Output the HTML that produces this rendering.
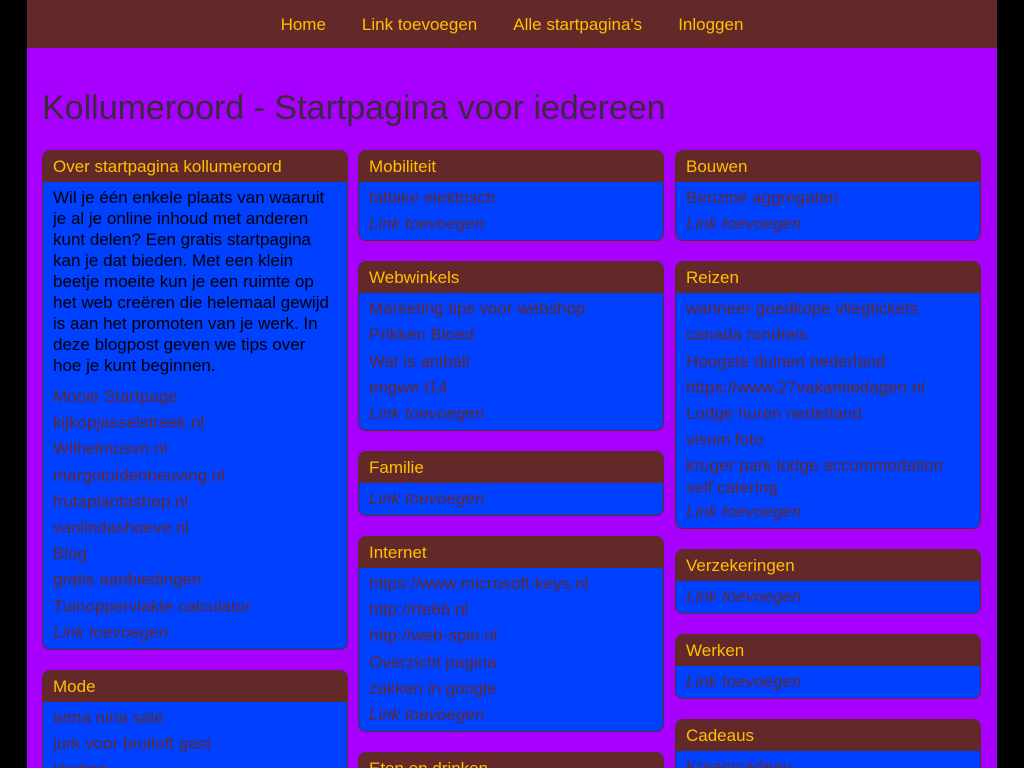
<!DOCTYPE html>
<html><head><meta charset="utf-8"><style>
html,body{margin:0;padding:0;background:#000;height:768px;overflow:hidden;}
body{font-family:"Liberation Sans",Arial,sans-serif;font-size:17px;position:relative;}
.wrap{position:absolute;left:27px;width:970px;top:0;height:768px;background:#a800ff;overflow:hidden;}
.nav{height:48px;background:#632828;text-align:center;}
.nav a{display:inline-block;color:#ffc000;text-decoration:none;line-height:50px;margin:0 18px;font-size:17px;}
h1{position:absolute;left:15px;top:89px;margin:0;font-weight:normal;font-size:34px;color:#3a2a3a;line-height:38px;white-space:nowrap;}
.col{position:absolute;top:150px;width:306px;}
.box{border:1px solid #632828;border-radius:8px;background:#0040ff;overflow:hidden;margin-bottom:20px;}
.hd{background:#632828;color:#ffc000;height:31px;line-height:31px;padding:0 10px;white-space:nowrap;}
.bd{padding:3px 10px 3px;}
.bd a{display:block;color:#632828;line-height:26.2px;text-decoration:none;white-space:nowrap;}
.bd a.add{font-style:italic;line-height:26px;}
.bd p{margin:2px 0 8px;color:#000;line-height:21px;}
</style></head><body><div class="wrap">
<div class="nav"><a>Home</a><a>Link toevoegen</a><a>Alle startpagina's</a><a>Inloggen</a></div>
<h1>Kollumeroord - Startpagina voor iedereen</h1>
<div class="col" style="left:15px">
<div class="box"><div class="hd">Over startpagina kollumeroord</div><div class="bd"><p>Wil je één enkele plaats van waaruit je al je online inhoud met anderen kunt delen? Een gratis startpagina kan je dat bieden. Met een klein beetje moeite kun je een ruimte op het web creëren die helemaal gewijd is aan het promoten van je werk. In deze blogpost geven we tips over hoe je kunt beginnen.</p>
<a>Mooie Startpage</a><a>kijkopjasselstreek.nl</a><a>Wilhelmusvn.nl</a><a>margotoldenbeuving.nl</a><a>frutaplantashop.nl</a><a>vanlindashoeve.nl</a><a>Blog</a><a>gratis aanbiedingen</a><a>Tuinoppervlakte calculator</a><a class="add">Link toevoegen</a></div></div>
<div class="box"><div class="hd">Mode</div><div class="bd"><a>anna nina sale</a><a>jurk voor bruiloft gast</a><a>kleding</a></div></div>
</div>
<div class="col" style="left:331px">
<div class="box"><div class="hd">Mobiliteit</div><div class="bd"><a>fatbike elektrisch</a><a class="add">Link toevoegen</a></div></div>
<div class="box"><div class="hd">Webwinkels</div><div class="bd"><a>Marketing tips voor webshop</a><a>Prikken Bloed</a><a>Wat is aniball</a><a>engwe t14</a><a class="add">Link toevoegen</a></div></div>
<div class="box"><div class="hd">Familie</div><div class="bd"><a class="add">Link toevoegen</a></div></div>
<div class="box"><div class="hd">Internet</div><div class="bd"><a>https://www.microsoft-keys.nl</a><a>http://rte66.nl</a><a>http://web-spin.nl</a><a>Overzicht pagina</a><a>zakken in google</a><a class="add">Link toevoegen</a></div></div>
<div class="box"><div class="hd">Eten en drinken</div><div class="bd"><a>recepten</a></div></div>
</div>
<div class="col" style="left:648px">
<div class="box"><div class="hd">Bouwen</div><div class="bd"><a>Benzine aggregaten</a><a class="add">Link toevoegen</a></div></div>
<div class="box"><div class="hd">Reizen</div><div class="bd"><a>wanneer goedkope vliegtickets</a><a>canada rondreis</a><a>Hoogste duinen nederland</a><a>https://www.27vakantiedagen.nl</a><a>Lodge huren nederland</a><a>visum foto</a><a style="line-height:22px;padding-top:2px;white-space:normal">kruger park lodge accommodation self catering</a><a class="add">Link toevoegen</a></div></div>
<div class="box"><div class="hd">Verzekeringen</div><div class="bd"><a class="add">Link toevoegen</a></div></div>
<div class="box"><div class="hd">Werken</div><div class="bd"><a class="add">Link toevoegen</a></div></div>
<div class="box"><div class="hd">Cadeaus</div><div class="bd"><a>Kraamcadeau</a></div></div>
</div>
</div></body></html>
